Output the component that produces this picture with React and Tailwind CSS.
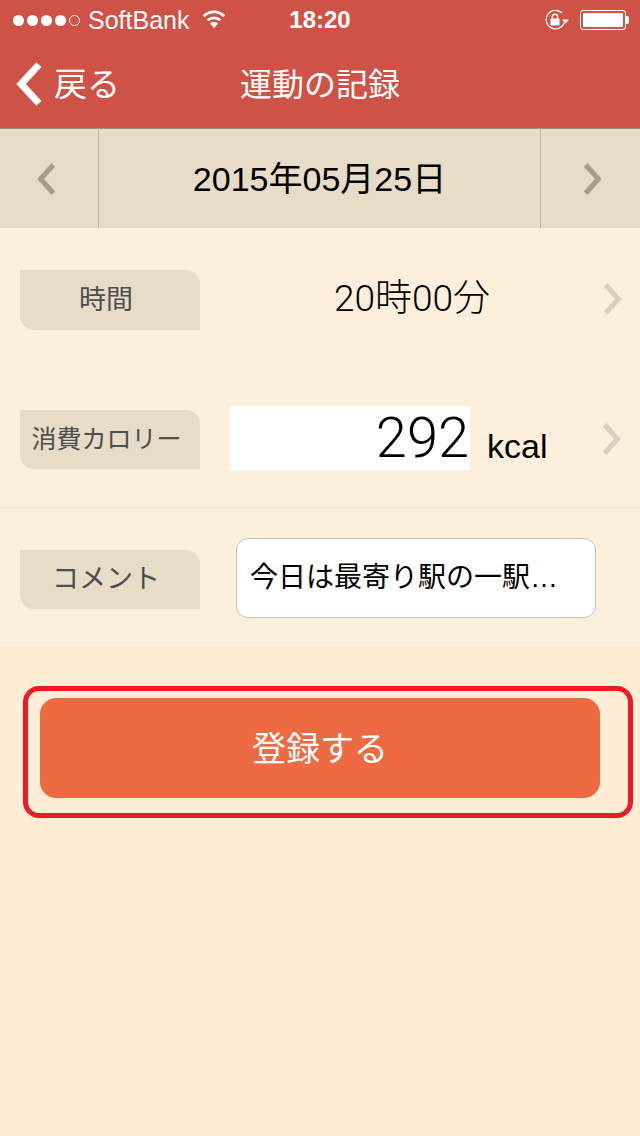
const SANS = 'font-["Liberation_Sans","Noto_Sans_CJK_JP",sans-serif]'
const LIGHT = 'font-["Roboto","Noto_Sans_CJK_JP",sans-serif] font-light'

function Chevron({ dir = 'right', color, className }) {
  const d = dir === 'left' ? 'M18 2 L4 17 L18 32' : 'M4 2 L18 17 L4 32'
  return (
    <svg viewBox="0 0 22 34" className={className} fill="none" preserveAspectRatio="none">
      <path d={d} stroke={color} strokeWidth="5.5" />
    </svg>
  )
}

function Label({ children, className = 'text-[27px] h-[60px]' }) {
  return (
    <div className={`w-[180px] pr-[8px] flex items-center justify-center shrink-0 bg-[#e7dcc8] rounded-tr-[14px] rounded-bl-[14px] text-[#4d4d4d] ${className}`}>
      {children}
    </div>
  )
}

function StatusBar() {
  return (
    <div className="h-[40px] flex items-center pl-[13px] pr-[11px] text-white">
      <div className="flex items-center gap-[3px]">
        {[0, 1, 2, 3].map(i => (
          <span key={i} className="w-[11px] h-[11px] rounded-full bg-white" />
        ))}
        <span className="w-[11px] h-[11px] rounded-full border border-white" />
      </div>
      <span className="ml-[8px] text-[25px] leading-none">SoftBank</span>
      <svg viewBox="0 0 26 20" className="w-[24px] h-[18px] ml-[13px] mt-[-2px]" fill="none" stroke="#fff" strokeWidth="3">
        <path d="M1.5 7 A16 16 0 0 1 24.5 7" />
        <path d="M6 11.5 A10 10 0 0 1 20 11.5" />
        <path d="M13 20 L8.5 15 A6 6 0 0 1 17.5 15 Z" fill="#fff" stroke="none" />
      </svg>
      <span className="absolute left-0 right-0 text-center text-[24px] font-bold leading-none pointer-events-none">18:20</span>
      <div className="ml-auto flex items-center">
        {/* rotation lock */}
        <svg viewBox="0 0 24 20" className="w-[24px] h-[20px]" fill="none">
          <path d="M19.3 12.5 A9.3 9.3 0 1 1 17 3" stroke="#fff" strokeWidth="1.2" />
          <path d="M17 9.5 H24 L20.5 13.5 Z" fill="#fff" />
          <rect x="5.5" y="8.5" width="9" height="7" rx="0.8" fill="#fff" />
          <path d="M7.3 8.5 V7 A2.7 2.7 0 0 1 12.7 7 V8.5" stroke="#fff" strokeWidth="1.4" />
        </svg>
        <div className="ml-[11px] w-[46px] h-[20px] rounded-[3px] border border-white p-[2px]">
          <div className="w-full h-full bg-white rounded-[1px]" />
        </div>
        <div className="w-[3px] h-[8px] bg-white rounded-r-[2px]" />
      </div>
    </div>
  )
}

export default function App() {
  return (
    <div className={`relative w-[640px] h-[1136px] overflow-hidden bg-[#feeed5] ${SANS}`}>
      {/* Header */}
      <header className="relative h-[129px] bg-[#cf5246] border-b border-[#9b9384]">
        <StatusBar />
        <div className="relative h-[88px] flex items-center text-white">
          <Chevron dir="left" color="#fff" className="w-[28px] h-[44px] ml-[16px] mt-[-1px]" />
          <span className="ml-[10px] text-[33px] leading-none mt-[1px]">戻る</span>
          <span className="absolute left-0 right-0 text-center text-[32px] leading-none mt-[1px]">運動の記録</span>
        </div>
      </header>

      {/* Date bar */}
      <div className="h-[99px] flex items-stretch bg-[#e6dcc8]">
        <div className="w-[98px] flex items-center justify-center border-r border-[#bdb5a6] box-content">
          <Chevron dir="left" color="#a59d8c" className="w-[20px] h-[32px] mr-[4px]" />
        </div>
        <div className="w-[441px] flex items-center justify-center text-[34px] leading-none text-black">2015年05月25日</div>
        <div className="flex-1 flex items-center justify-center border-l border-[#bdb5a6]">
          <Chevron color="#a59d8c" className="w-[20px] h-[32px] ml-[3px]" />
        </div>
      </div>

      {/* Rows */}
      <div className="bg-[#fcefdb]">
        <div className="h-[140px] pt-[42px] pl-[20px] flex items-start">
          <Label>時間</Label>
          <span className={`w-[424px] mt-[9px] text-center text-[37px] leading-[40px] text-black ${LIGHT}`}>20時00分</span>
          <Chevron color="#d9d0bf" className="w-[20px] h-[32px] mt-[13px] ml-[-22px]" />
        </div>
        <div className="h-[140px] border-b border-[#ece2d0] pl-[20px] pt-[38px] flex items-start">
          <div className="mt-[4px]"><Label className="text-[25px] h-[59px] !pr-[7px]">消費カロリー</Label></div>
          <div className={`ml-[30px] w-[240px] h-[64px] bg-white flex items-center justify-end pr-[1px] text-[56px] leading-none text-black ${LIGHT}`}>292</div>
          <span className="ml-[17px] mt-[21px] text-[34px] leading-[38px] text-black">kcal</span>
          <Chevron color="#d9d0bf" className="w-[20px] h-[32px] ml-[54px] mt-[17px]" />
        </div>
        <div className="h-[140px] border-b border-[#f3e8d5] pl-[20px] pt-[30px] flex items-start">
          <div className="mt-[12px]"><Label className="text-[27px] h-[59px]">コメント</Label></div>
          <div className="ml-[36px] w-[360px] h-[80px] bg-white border border-[#c8c2b6] rounded-[12px] flex items-center pl-[13px] text-[28px] leading-none text-black">
            今日は最寄り駅の一駅…
          </div>
        </div>
      </div>

      {/* Register button */}
      <div className="ml-[23px] mt-[38px] w-[610px] h-[132px] border-[5px] border-[#ed1c24] rounded-[16px] pl-[12px] pt-[7px]">
        <button className="w-[560px] h-[100px] pt-[2px] bg-[#ee6a42] rounded-[16px] text-white text-[34px] leading-none">登録する</button>
      </div>
    </div>
  )
}
